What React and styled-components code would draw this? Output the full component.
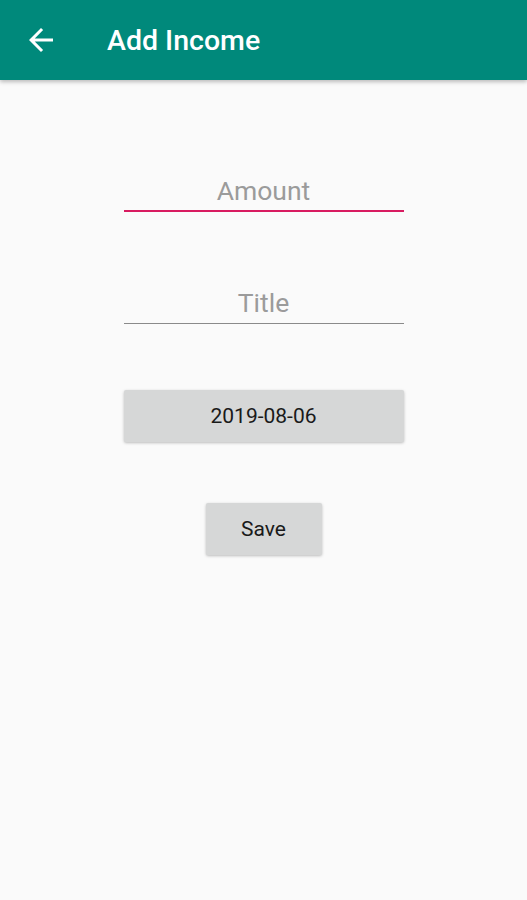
import React, { useState } from "react";
import styled, { createGlobalStyle } from "styled-components";

const Global = createGlobalStyle`
  html, body {
    margin: 0;
    padding: 0;
    background: #fafafa;
    font-family: Roboto, "Noto Sans", sans-serif;
  }
`;

const Screen = styled.div`
  width: 527px;
  height: 900px;
  background: #fafafa;
  display: flex;
  flex-direction: column;
`;

const AppBar = styled.div`
  height: 80px;
  background: #00897b;
  display: flex;
  align-items: center;
  padding-left: 23px;
  box-shadow: 0 2px 4px rgba(0, 0, 0, 0.25);
  flex-shrink: 0;
`;

const BackButton = styled.button`
  background: transparent;
  border: none;
  padding: 0;
  width: 36px;
  height: 36px;
  display: flex;
  align-items: center;
  justify-content: center;
  cursor: pointer;
`;

const Title = styled.div`
  color: #fff;
  font-size: 28.5px;
  font-weight: 500;
  margin-left: 48px;
  margin-top: 1px;
`;

// form

const Form = styled.div`
  display: flex;
  flex-direction: column;
  align-items: center;
  padding-top: 90px;
`;

const Field = styled.input`
  width: 280px;
  box-sizing: border-box;
  height: 42px;
  border: none;
  border-bottom: ${(p) => (p.focused ? "2px solid #d81b60" : "1.5px solid #8a8a8a")};
  background: transparent;
  text-align: center;
  font-family: Roboto, sans-serif;
  font-size: 26.5px;
  color: #333;
  outline: none;
  padding: 0;
  margin-bottom: ${(p) => p.gap || 0}px;

  &::placeholder {
    color: #9b9b9b;
  }
`;

const Button = styled.button`
  width: ${(p) => p.w}px;
  height: 52px;
  background: #d6d7d7;
  border: none;
  border-radius: 2px;
  box-shadow: 0 1px 3px rgba(0, 0, 0, 0.25);
  font-family: Roboto, sans-serif;
  font-size: 21px;
  color: #1a1a1a;
  margin-bottom: ${(p) => p.gap || 0}px;
`;

function Arrow() {
  return (
    <svg width="36" height="36" viewBox="0 0 24 24">
      <path
        d="M20 11H7.83l5.59-5.59L12 4l-8 8 8 8 1.41-1.41L7.83 13H20v-2z"
        fill="#fff"
      />
    </svg>
  );
}

export default function App() {
  const [amount, setAmount] = useState("");
  const [title, setTitle] = useState("");

  return (
    <Screen>
      <Global />
      <AppBar>
        <BackButton>
          <Arrow />
        </BackButton>
        <Title>Add Income</Title>
      </AppBar>
      <Form>
        <Field
          focused
          gap={70}
          placeholder="Amount"
          value={amount}
          onChange={(e) => setAmount(e.target.value)}
        />
        <Field
          gap={66}
          placeholder="Title"
          value={title}
          onChange={(e) => setTitle(e.target.value)}
        />
        <Button w={280} gap={61}>2019-08-06</Button>
        <Button w={116}>Save</Button>
      </Form>
    </Screen>
  );
}
